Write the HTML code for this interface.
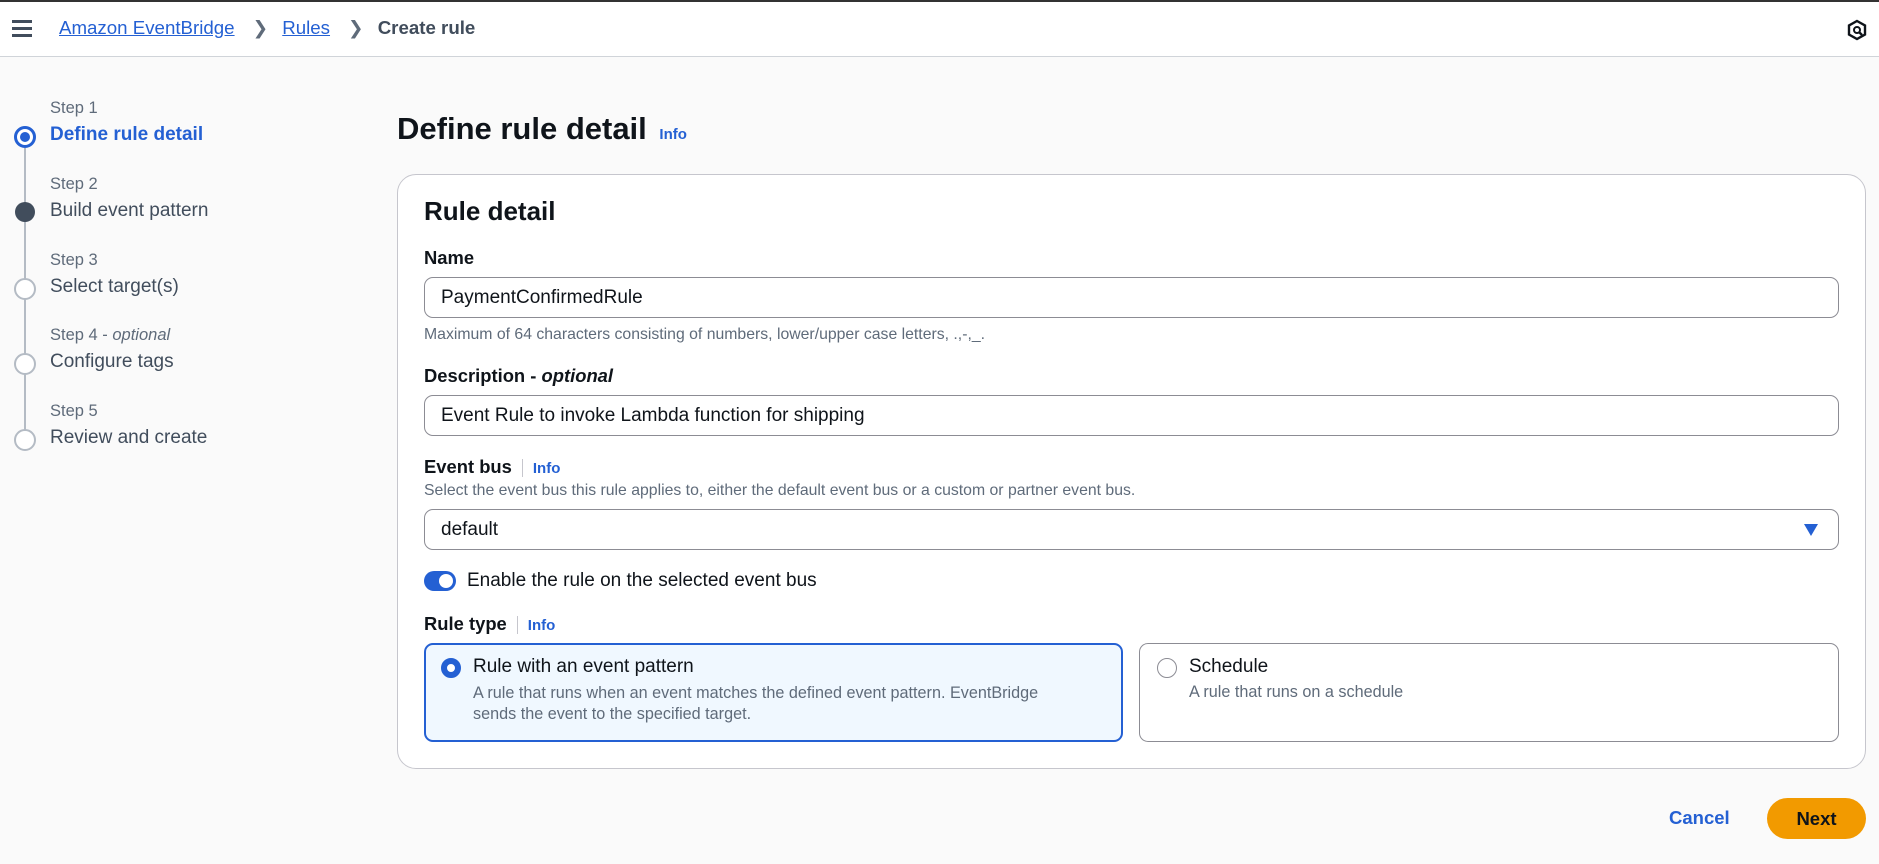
<!DOCTYPE html>
<html><head><meta charset="utf-8"><style>
*{box-sizing:border-box;margin:0;padding:0}
body{width:1879px;height:864px;overflow:hidden;background:#fafafa;font-family:"Liberation Sans",sans-serif;color:#0f141a;position:relative}
.hdr{position:absolute;left:0;top:0;width:1879px;height:57px;background:#fff;border-top:2px solid #333;border-bottom:1px solid #d0d4d9}
.abs{position:absolute;white-space:nowrap}
a{color:#2460d3;text-decoration:underline}
.step{position:absolute;left:50px;font-size:16.5px;color:#5f6b7a}
.stt{position:absolute;left:50px;font-size:19px;color:#414d5c}
.dot{position:absolute;left:14px;width:22px;height:22px;border-radius:50%;border:2px solid #b4bbc4;background:#fff}
.line{position:absolute;left:24px;width:2px;background:#b4bbc4}
.card{position:absolute;left:397px;top:174px;width:1469px;height:595px;background:#fff;border:1px solid #c6c6cd;border-radius:19px}
.lbl{position:absolute;left:424px;font-size:18.4px;font-weight:bold}
.inp{position:absolute;left:424px;width:1415px;height:41px;border:1px solid #8c8c94;border-radius:9px;background:#fff;font-size:19px;padding:0 16px;line-height:39px}
.hint{position:absolute;left:424px;font-size:15.8px;color:#5f6b7a}
.info{color:#2460d3;font-weight:bold;font-size:15px}
.sep{display:inline-block;width:1px;height:18px;background:#c6c6cd;margin:0 10px;vertical-align:middle}
.tile{position:absolute;top:643px;height:99px;border-radius:9px}
</style></head><body>
<div class="hdr"></div>
<div class="abs" style="left:12px;top:20px;width:20px">
 <div style="height:3px;background:#414d5c;margin-bottom:4px"></div><div style="height:3px;background:#414d5c;margin-bottom:4px"></div><div style="height:3px;background:#414d5c"></div></div>
<div class="abs" style="left:59px;top:17px;font-size:18.7px;color:#414d5c"><a>Amazon EventBridge</a><span style="margin:0 14px 0 18px;color:#5f6b7a">&#x276F;</span><a>Rules</a><span style="margin:0 14px 0 18px;color:#5f6b7a">&#x276F;</span><b>Create rule</b></div>
<svg class="abs" style="left:1846px;top:19px" width="22" height="22" viewBox="0 0 22 22"><polygon points="11,2 19,6.5 19,15.5 11,20 3,15.5 3,6.5" fill="none" stroke="#0f141a" stroke-width="2.4"/><circle cx="11" cy="11" r="3" fill="none" stroke="#0f141a" stroke-width="2"/><line x1="13" y1="13" x2="16" y2="16" stroke="#0f141a" stroke-width="2.4"/></svg>

<div class="line" style="top:148px;height:282px"></div>
<div class="step" style="top:99px">Step 1</div>
<div class="stt" style="top:124px;color:#2460d3;font-weight:bold">Define rule detail</div>
<div class="dot" style="top:126px;border:3px solid #2460d3"><div style="margin:3px;width:10px;height:10px;border-radius:50%;background:#2460d3"></div></div>
<div class="step" style="top:175px">Step 2</div>
<div class="stt" style="top:200px">Build event pattern</div>
<div class="dot" style="top:202px;width:20px;height:20px;left:15px;border:none;background:#414d5c"></div>
<div class="step" style="top:251px">Step 3</div>
<div class="stt" style="top:276px">Select target(s)</div>
<div class="dot" style="top:278px"></div>
<div class="step" style="top:326px">Step 4 - <i>optional</i></div>
<div class="stt" style="top:351px">Configure tags</div>
<div class="dot" style="top:353px"></div>
<div class="step" style="top:402px">Step 5</div>
<div class="stt" style="top:427px">Review and create</div>
<div class="dot" style="top:429px"></div>

<div class="abs" style="left:397px;top:111px;font-size:31px;font-weight:bold">Define rule detail <span class="info" style="margin-left:4px">Info</span></div>
<div class="card"></div>
<div class="abs" style="left:424px;top:196px;font-size:26px;font-weight:bold">Rule detail</div>
<div class="lbl" style="top:247px">Name</div>
<div class="inp" style="top:277px">PaymentConfirmedRule</div>
<div class="hint" style="top:326px">Maximum of 64 characters consisting of numbers, lower/upper case letters, .,-,_.</div>
<div class="lbl" style="top:365px">Description - <i>optional</i></div>
<div class="inp" style="top:395px">Event Rule to invoke Lambda function for shipping</div>
<div class="lbl" style="top:456px">Event bus<span class="sep"></span><span class="info">Info</span></div>
<div class="hint" style="top:482px">Select the event bus this rule applies to, either the default event bus or a custom or partner event bus.</div>
<div class="inp" style="top:509px">default<svg style="position:absolute;right:20px;top:14px" width="14" height="12"><polygon points="0,0 14,0 7,12" fill="#2460d3"/></svg></div>
<div class="abs" style="left:424px;top:571px;width:32px;height:20px;border-radius:10px;background:#2460d3"><div style="position:absolute;right:3px;top:3px;width:14px;height:14px;border-radius:50%;background:#fff"></div></div>
<div class="abs" style="left:467px;top:570px;font-size:19px">Enable the rule on the selected event bus</div>
<div class="lbl" style="top:613px">Rule type<span class="sep"></span><span class="info">Info</span></div>
<div class="tile" style="left:424px;width:699px;background:#f0f8ff;border:2px solid #2460d3"></div>
<div class="abs" style="left:441px;top:658px;width:20px;height:20px;border-radius:50%;border:6px solid #2460d3;background:#fff"></div>
<div class="abs" style="left:473px;top:656px;font-size:19px">Rule with an event pattern</div>
<div class="abs" style="left:473px;top:683px;font-size:16.2px;color:#5f6b7a;line-height:21px">A rule that runs when an event matches the defined event pattern. EventBridge<br>sends the event to the specified target.</div>
<div class="tile" style="left:1139px;width:700px;background:#fff;border:1px solid #8c8c94"></div>
<div class="abs" style="left:1157px;top:658px;width:20px;height:20px;border-radius:50%;border:1.5px solid #8c8c94;background:#fff"></div>
<div class="abs" style="left:1189px;top:656px;font-size:19px">Schedule</div>
<div class="abs" style="left:1189px;top:683px;font-size:16.2px;color:#5f6b7a">A rule that runs on a schedule</div>

<div class="abs" style="left:1669px;top:807px;font-size:18.5px;font-weight:bold;color:#2460d3">Cancel</div>
<div class="abs" style="left:1767px;top:798px;width:99px;height:41px;border-radius:21px;background:#f29a00;font-size:18.5px;font-weight:bold;text-align:center;line-height:41px">Next</div>
</body></html>
